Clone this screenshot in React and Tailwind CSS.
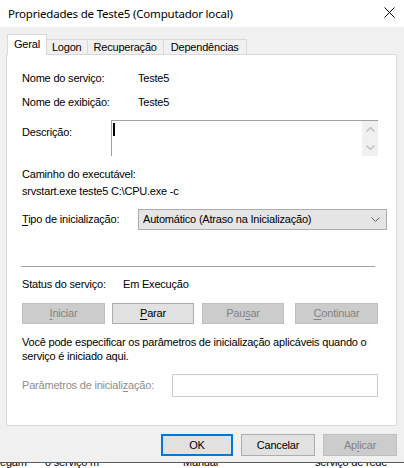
import React from "react";

const F = "font-['Liberation_Sans',Arial,sans-serif]";

function Btn({ children, w, disabled, ml }) {
  const base = "h-[21px] flex items-center justify-center text-[11px] leading-[13px] border";
  const cls = disabled
    ? "bg-[#cccccc] border-[#bfbfbf] text-[#838383]"
    : "bg-[#e1e1e1] border-[#adadad] text-black";
  return (
    <div className={`${base} ${cls} ${w} ${ml || ""} shrink-0`}>{children}</div>
  );
}

export default function App() {
  return (
    <div className={`w-[404px] h-[468px] bg-[#f0f0f0] overflow-hidden flex flex-col ${F} text-[11px] leading-[13px] tracking-[-0.2px] text-black`}>
      {/* Title bar */}
      <div className="h-[27px] bg-white flex items-center justify-between pl-[8px] pr-[9px] shrink-0">
        <span className="font-['Noto_Sans',sans-serif] text-[11.5px] leading-[16px] text-black tracking-[-0.2px]">
          Propriedades de Teste5 (Computador local)
        </span>
        <svg width="11" height="11" viewBox="0 0 11 11" className="mt-[-2px]">
          <path d="M0.5 0.5 L10.5 10.5 M10.5 0.5 L0.5 10.5" stroke="#000" strokeWidth="1" fill="none" />
        </svg>
      </div>

      {/* Tabs */}
      <div className="pl-[6px] pr-[7px] pt-[7px] shrink-0">
        <div className="flex items-end h-[20px] pl-[1px]">
          <div className="h-[21px] mb-[-1px] px-[6px] bg-white border border-b-0 border-[#d9d9d9] flex items-start pt-[3px] relative z-10">
            Geral
          </div>
          <div className="h-[15px] px-[5px] border-t border-r border-[#d9d9d9] flex items-center pt-[1px]">Logon</div>
          <div className="h-[15px] px-[6px] border-t border-r border-[#d9d9d9] flex items-center pt-[1px]">Recuperação</div>
          <div className="h-[15px] px-[7px] border-t border-r border-[#d9d9d9] flex items-center pt-[1px]">Dependências</div>
        </div>

        {/* Panel */}
        <div className="h-[372px] bg-white border border-[#d9d9d9] flex flex-col pl-[15px]">
          <div className="mt-[15px] h-[16px] flex items-center">
            <span className="w-[116px]">Nome do serviço:</span>
            <span>Teste5</span>
          </div>
          <div className="mt-[8px] h-[16px] flex items-center">
            <span className="w-[116px]">Nome de exibição:</span>
            <span>Teste5</span>
          </div>
          <div className="mt-[10px] flex items-start">
            <span className="w-[89px] pt-[6px]">Descrição:</span>
            <div className="w-[267px] h-[36px] border-t border-l border-[#a0a0a0] flex">
              <div className="flex-1 relative">
                <div className="absolute left-[1px] top-[2px] w-[2px] h-[13px] bg-black" />
              </div>
              <div className="w-[16px] bg-[#f0f0f0] flex flex-col items-center justify-between py-[6px]">
                <svg width="9" height="5" viewBox="0 0 9 5">
                  <path d="M0.5 4.5 L4.5 0.5 L8.5 4.5" stroke="#c2c2c2" strokeWidth="1.5" fill="none" />
                </svg>
                <svg width="9" height="5" viewBox="0 0 9 5">
                  <path d="M0.5 0.5 L4.5 4.5 L8.5 0.5" stroke="#c2c2c2" strokeWidth="1.5" fill="none" />
                </svg>
              </div>
            </div>
          </div>
          <div className="mt-[10px] h-[16px] flex items-center">Caminho do executável:</div>
          <div className="mt-[1px] h-[16px] flex items-center">srvstart.exe teste5 C:\CPU.exe -c</div>
          <div className="mt-[10px] flex items-center">
            <span className="w-[116px]">
              <span className="underline underline-offset-2">T</span>ipo de inicialização:
            </span>
            <div className="w-[249px] h-[21px] bg-[#e5e5e5] border border-[#acacac] flex items-center justify-between pl-[4px] pr-[6px]">
              <span>Automático (Atraso na Inicialização)</span>
              <svg width="9" height="5" viewBox="0 0 9 5">
                <path d="M0.5 0.5 L4.5 4.5 L8.5 0.5" stroke="#606060" strokeWidth="1" fill="none" />
              </svg>
            </div>
          </div>
          <div className="mt-[36px] h-[1px] w-[354px] ml-[-1px] bg-[#a0a0a0]" />
          <div className="mt-[9px] h-[16px] flex items-center">
            <span className="w-[101px]">Status do serviço:</span>
            <span>Em Execução</span>
          </div>
          <div className="mt-[11px] flex">
            <Btn w="w-[83px]" disabled>
              <span><span className="underline underline-offset-2">I</span>niciar</span>
            </Btn>
            <Btn w="w-[82px]" ml="ml-[7px]">
              <span><span className="underline underline-offset-2">P</span>arar</span>
            </Btn>
            <Btn w="w-[82px]" ml="ml-[8px]" disabled>
              <span>Pau<span className="underline underline-offset-2">s</span>ar</span>
            </Btn>
            <Btn w="w-[83px]" ml="ml-[11px]" disabled>
              <span><span className="underline underline-offset-2">C</span>ontinuar</span>
            </Btn>
          </div>
          <div className="mt-[11px] leading-[14px] w-[360px]">
            Você pode especificar os parâmetros de inicialização aplicáveis quando o serviço é iniciado aqui.
          </div>
          <div className="mt-[11px] flex items-center">
            <span className="w-[150px] text-[#8d8d8d]">
              Parâmetros de iniciali<span className="underline underline-offset-2">z</span>ação:
            </span>
            <div className="w-[206px] h-[23px] border border-[#cccccc] bg-white" />
          </div>
        </div>
      </div>

      {/* Bottom buttons */}
      <div className="mt-[8px] flex justify-end pr-[7px] shrink-0">
        <div className="w-[72px] h-[22px] flex items-center justify-center bg-[#e1e1e1] border-2 border-[#0078d7]">OK</div>
        <div className="ml-[8px] w-[74px] h-[22px] flex items-center justify-center bg-[#e1e1e1] border border-[#adadad]">Cancelar</div>
        <div className="ml-[8px] w-[74px] h-[22px] flex items-center justify-center bg-[#cccccc] border border-[#bfbfbf] text-[#838383]">
          <span>Ap<span className="underline underline-offset-2">l</span>icar</span>
        </div>
      </div>

      <div className="mt-[6px] h-[1px] bg-[#5a5a5a] shrink-0" />
      <div className="flex-1 bg-white overflow-hidden">
        <div className="flex mt-[-7px] whitespace-nowrap">
          <span className="w-[45px]">egam</span>
          <span className="w-[138px]">o serviço m</span>
          <span className="w-[132px]">Manual</span>
          <span>serviço de rede</span>
        </div>
      </div>
    </div>
  );
}
